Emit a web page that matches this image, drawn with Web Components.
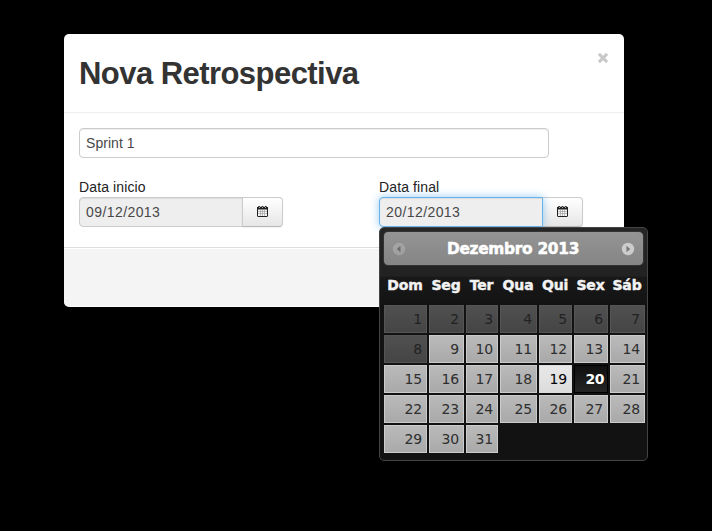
<!DOCTYPE html>
<html lang="pt-BR">
<head>
<meta charset="utf-8">
<title>Nova Retrospectiva</title>
<style>
body{margin:0;background:#000;height:531px;overflow:hidden;font:14px/20px "Liberation Sans",Arial,sans-serif;color:#333}
</style>
</head>
<body>
<retro-modal heading="Nova Retrospectiva">
  <text-field value="Sprint 1"></text-field>
  <date-row>
    <date-field label="Data inicio" value="09/12/2013"></date-field>
    <date-field label="Data final" value="20/12/2013" focused><month-calendar></month-calendar></date-field>
  </date-row>
</retro-modal>
<script>
const define = (name, html, setup) => customElements.define(name, class extends HTMLElement {
  connectedCallback() {
    if (this.shadowRoot) return;
    const t = document.createElement('template');
    t.innerHTML = html;
    this.attachShadow({mode: 'open'}).append(t.content.cloneNode(true));
    if (setup) setup(this, this.shadowRoot);
  }
});

define('retro-modal', `
<style>
:host{display:block;box-sizing:border-box;width:560px;height:273px;margin:34px 0 0 64px;background:#fff;border-radius:5px}
header{display:flex;justify-content:space-between;height:78px;box-sizing:content-box;border-bottom:1px solid #eee;padding:0 15px}
h1{margin:20px 0 0;font-size:31px;line-height:40px;font-weight:bold;letter-spacing:-.55px;white-space:nowrap}
svg{width:12px;height:12px;margin-top:18px}
main{height:119px;padding:15px 15px 0;box-sizing:content-box}
footer{height:58px;border-top:1px solid #ddd;background:#f4f4f4;box-shadow:inset 0 1px #fff;border-radius:0 0 5px 5px}
</style>
<header><h1></h1><svg viewBox="0 0 12 12"><path d="M1.9 1.9 10.1 10.1M10.1 1.9 1.9 10.1" stroke="#c8c8c8" stroke-width="2.9"/></svg></header>
<main><slot></slot></main>
<footer></footer>`, (el, r) => r.querySelector('h1').textContent = el.getAttribute('heading'));

define('text-field', `
<style>
:host{display:block;box-sizing:border-box;width:470px;height:30px;padding:4px 6px;border:1px solid #ccc;border-radius:4px;box-shadow:inset 0 1px 1px rgba(0,0,0,.075);color:#484848;letter-spacing:.05px}
</style><span></span>`, (el, r) => r.querySelector('span').textContent = el.getAttribute('value'));

define('date-row', `
<style>:host{display:grid;grid-template-columns:300px 204px;margin-top:19px}</style><slot></slot>`);

define('date-field', `
<style>
:host{display:block;position:relative;width:204px}
label{display:block;height:20px;color:#222;letter-spacing:.12px}
.group{display:flex}
.value{box-sizing:border-box;width:164px;height:30px;padding:4px 6px;border:1px solid #ccc;border-radius:4px 0 0 4px;background:#eee;color:#484848;letter-spacing:.42px;box-shadow:inset 0 1px 1px rgba(0,0,0,.075)}
:host([focused]) .value{position:relative;z-index:1;border-color:#68b2ec;box-shadow:inset 0 1px 1px rgba(0,0,0,.075),0 0 8px rgba(82,168,236,.6)}
.button{display:flex;justify-content:center;align-items:center;box-sizing:border-box;width:41px;height:30px;margin-left:-1px;border:1px solid #ccc;border-bottom-color:#b8b8b8;border-radius:0 4px 4px 0;background:linear-gradient(#fff,#e6e6e6);box-shadow:inset 0 1px 0 rgba(255,255,255,.2),0 1px 2px rgba(0,0,0,.05)}
svg{width:11px;height:11px;display:block;margin-top:-1px}
</style>
<label></label>
<div class="group"><div class="value"></div><div class="button"><svg viewBox="0 0 11 11"><rect x=".5" y="1.5" width="10" height="9" rx=".5" fill="#f6f6f6" stroke="#222"/><path d="M0 1h11v2.5H0z" fill="#222"/><path d="M1.3 0h1.9v1H1.3zM4.5 0h2v1h-2zM7.8 0h1.9v1H7.8z" fill="#333"/><path d="M2 1h1v1H2zM5 1h1v1H5zM8 1h1v1H8z" fill="#aaa"/><path d="M3.5 4v6M5.5 4v6M7.5 4v6M1 5.5h9M1 7.5h9" stroke="#888" stroke-width=".5"/></svg></div></div>
<slot></slot>`, (el, r) => {
  r.querySelector('label').textContent = el.getAttribute('label');
  r.querySelector('.value').textContent = el.getAttribute('value');
});

define('month-calendar', `
<style>
:host{position:absolute;z-index:2;left:0;top:50px;box-sizing:border-box;width:269px;height:234px;padding:3px 3px 0 4px;border:1px solid #444;border-radius:5px;background:linear-gradient(#262626 0,#222 48px,#191919 49px,#121212 80px,#121212);font-family:"DejaVu Sans",Verdana,sans-serif;letter-spacing:0;color:#fff}
.bar{display:flex;align-items:center;justify-content:space-between;box-sizing:border-box;width:261px;height:35px;margin-left:-1px;padding:0 8px;border:1px solid #333;border-radius:5px;background:linear-gradient(#949494,#858585)}
.bar svg{width:14px;height:14px}
.bar svg:first-child{opacity:.35}
.title{font-size:15.4px;font-weight:bold;letter-spacing:-.3px;white-space:nowrap;-webkit-text-stroke:.5px #fff;margin-left:-1px}
.days,.names{display:grid;grid-template-columns:43px 35px 32px 37px 33px 34px 35px;column-gap:2px}
.names{margin-top:6px;height:33px;line-height:26px;font-size:14px;font-weight:bold;letter-spacing:-.15px;color:#f2f2f2;-webkit-text-stroke:.45px #f2f2f2}
.names span{display:flex;justify-content:center;white-space:nowrap;margin-left:-1px}
.days{grid-auto-rows:28px;row-gap:2px;font-size:14px;line-height:26px;text-align:right}
.day{box-sizing:border-box;padding-right:4px;border:1px solid #ccc;background:linear-gradient(#bababa,#a9a9a9);color:#2e2e2e;letter-spacing:-.1px}
.off{border-color:#555;background:linear-gradient(#505050,#454545);color:#222}
.today{border-color:#ddd;background:linear-gradient(#e8e8e8,#dcdcdc);color:#000}
.picked{padding-right:3px;border-color:#000;background:linear-gradient(#101010,#252525);color:#fff;font-weight:bold;letter-spacing:-.5px}
</style>
<div class="bar"><svg viewBox="0 0 14 14"><circle cx="7" cy="7" r="6.2" fill="#ccc"/><path d="M8.5 3.8v6.4L4.8 7z" fill="#333"/></svg><span class="title">Dezembro 2013</span><svg viewBox="0 0 14 14"><circle cx="7" cy="7" r="6.2" fill="#ccc"/><path d="M5.5 3.8v6.4L9.2 7z" fill="#777"/></svg></div>
<div class="names"></div><div class="days"></div>`, (el, r) => {
  const add = (sel, text, cls) => {
    const s = document.createElement('span');
    s.textContent = text; s.className = cls;
    r.querySelector(sel).append(s);
  };
  ['Dom','Seg','Ter','Qua','Qui','Sex','Sáb'].forEach(n => add('.names', n, ''));
  for (let d = 1; d <= 31; d++) add('.days', d, 'day' + (d < 9 ? ' off' : d === 19 ? ' today' : d === 20 ? ' picked' : ''));
});
</script>
</body>
</html>
